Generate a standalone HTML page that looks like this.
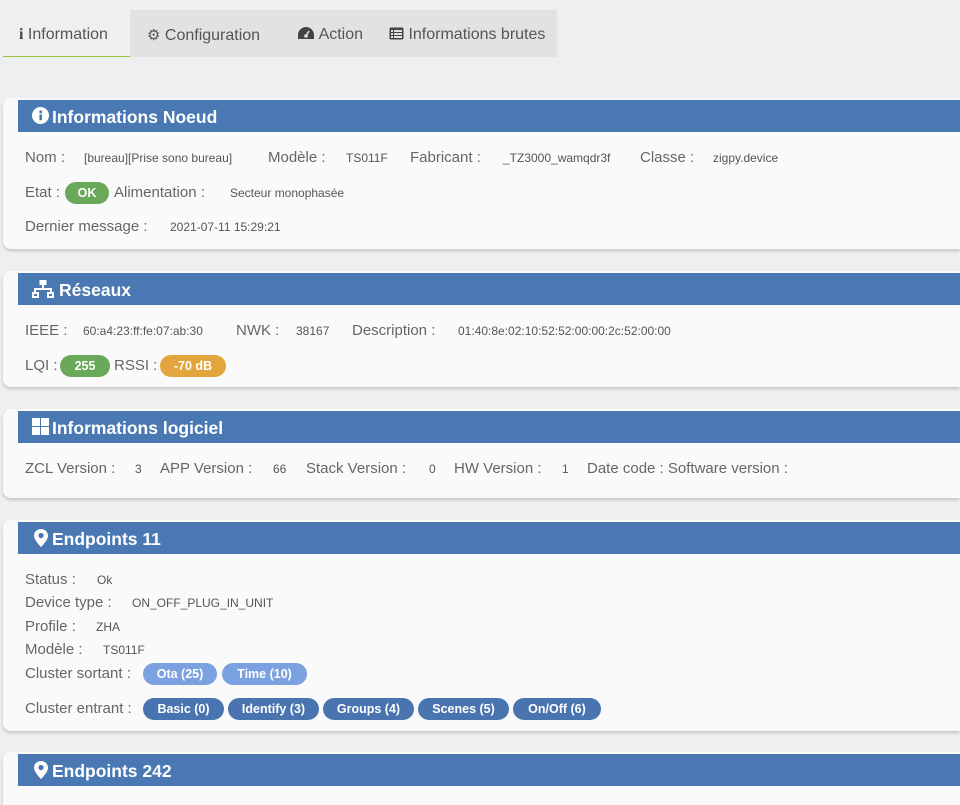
<!DOCTYPE html>
<html style="overflow:hidden;height:805px"><head><meta charset="utf-8"><style>
*{margin:0;padding:0;box-sizing:border-box}
body{width:960px;height:805px;overflow:hidden;background:#eeeff0;font-family:"Liberation Sans",sans-serif;position:relative}
.a{position:absolute;white-space:nowrap}
.tabs{position:absolute;left:130px;top:10px;width:427px;height:47px;background:#e1e2e2}
.tab{position:absolute;top:26px;font-size:16px;color:#555}
.card{position:absolute;left:3px;width:957px;background:#fafafa;border-radius:8px 0 0 8px;box-shadow:0 2px 3px rgba(0,0,0,.18)}
.hd{position:absolute;left:18px;width:942px;height:32px;background:#4a78b3;color:#fff;font-size:17.5px;font-weight:bold;padding:7px 0 0 34px}
.hd svg{position:absolute;left:14px;top:7px}
.l{position:absolute;font-size:15px;color:#666;white-space:nowrap}
.v{position:absolute;font-size:12px;color:#555;white-space:nowrap}
.b{position:absolute;height:22px;border-radius:11px;color:#fff;font-size:12.5px;font-weight:bold;text-align:center;line-height:22px}
.g{background:#6aa85a}.o{background:#e3a53d}.lb{background:#7ba1e0}.db{background:#4a74b0}
</style></head><body>
<div class="a" style="left:3px;top:10px;width:127px;height:47px;border-bottom:1px solid #9ac43a"></div>
<div class="tabs"></div>
<div class="tab" style="left:19px"><b style="font-family:'Liberation Serif';color:#444">i</b> Information</div>
<div class="tab" style="left:147px"><span style="font-size:15px">⚙</span> Configuration</div>
<div class="tab" style="left:297px"><svg width="18" height="14" viewBox="0 0 18 14" style="vertical-align:-1px"><path d="M9 1A8 8 0 0 0 1 9v4h16V9A8 8 0 0 0 9 1z" fill="#444"/><circle cx="9" cy="10" r="1.8" fill="#e1e2e2"/><path d="M9 10L12 5" stroke="#e1e2e2" stroke-width="1.6"/></svg> Action</div>
<div class="tab" style="left:389px"><svg width="15" height="13" viewBox="0 0 15 13" style="vertical-align:-1px"><rect x=".5" y=".5" width="14" height="12" rx="1.5" fill="#444"/><rect x="2" y="3" width="2" height="2" fill="#e1e2e2"/><rect x="5" y="3" width="8" height="2" fill="#e1e2e2"/><rect x="2" y="6" width="2" height="2" fill="#e1e2e2"/><rect x="5" y="6" width="8" height="2" fill="#e1e2e2"/><rect x="2" y="9" width="2" height="2" fill="#e1e2e2"/><rect x="5" y="9" width="8" height="2" fill="#e1e2e2"/></svg> Informations brutes</div>

<div class="card" style="top:98px;height:151px"></div>
<div class="hd" style="top:100px"><svg width="17" height="17" viewBox="0 0 16 16"><circle cx="8" cy="8" r="8" fill="#fff"/><rect x="7" y="7" width="2.4" height="5.5" fill="#4a78b3"/><circle cx="8.2" cy="4.6" r="1.4" fill="#4a78b3"/></svg>Informations Noeud</div>
<div class="l" style="left:25px;top:149px">Nom :</div><div class="v" style="left:84px;top:151px">[bureau][Prise sono bureau]</div>
<div class="l" style="left:268px;top:149px">Modèle :</div><div class="v" style="left:346px;top:151px">TS011F</div>
<div class="l" style="left:410px;top:149px">Fabricant :</div><div class="v" style="left:503px;top:151px">_TZ3000_wamqdr3f</div>
<div class="l" style="left:640px;top:149px">Classe :</div><div class="v" style="left:713px;top:151px">zigpy.device</div>
<div class="l" style="left:25px;top:184px">Etat :</div><div class="b g" style="left:65px;top:182px;width:44px">OK</div>
<div class="l" style="left:114px;top:184px">Alimentation :</div><div class="v" style="left:230px;top:186px">Secteur monophasée</div>
<div class="l" style="left:25px;top:218px">Dernier message :</div><div class="v" style="left:170px;top:220px">2021-07-11 15:29:21</div>

<div class="card" style="top:271px;height:116px"></div>
<div class="hd" style="top:273px"><svg width="22" height="18" viewBox="0 0 22 18"><g fill="#fff"><rect x="7.5" y="0" width="7" height="5"/><rect x="10" y="5" width="2" height="4"/><rect x="2" y="8" width="18" height="2"/><rect x="2" y="8" width="2" height="4"/><rect x="18" y="8" width="2" height="4"/><rect x="0" y="12" width="7" height="6"/><rect x="15" y="12" width="7" height="6"/></g><rect x="2" y="14" width="3" height="2" fill="#4a78b3"/><rect x="17" y="14" width="3" height="2" fill="#4a78b3"/></svg><span style="margin-left:7px">Réseaux</span></div>
<div class="l" style="left:25px;top:322px">IEEE :</div><div class="v" style="left:83px;top:324px">60:a4:23:ff:fe:07:ab:30</div>
<div class="l" style="left:236px;top:322px">NWK :</div><div class="v" style="left:296px;top:324px">38167</div>
<div class="l" style="left:352px;top:322px">Description :</div><div class="v" style="left:458px;top:324px">01:40:8e:02:10:52:52:00:00:2c:52:00:00</div>
<div class="l" style="left:25px;top:357px">LQI :</div><div class="b g" style="left:60px;top:355px;width:50px">255</div>
<div class="l" style="left:114px;top:357px">RSSI :</div><div class="b o" style="left:160px;top:355px;width:66px">-70 dB</div>

<div class="card" style="top:409px;height:89px"></div>
<div class="hd" style="top:411px"><svg width="17" height="17" viewBox="0 0 17 17"><g fill="#fff"><rect x="0" y="0" width="8" height="8"/><rect x="9" y="0" width="8" height="8"/><rect x="0" y="9" width="8" height="8"/><rect x="9" y="9" width="8" height="8"/></g></svg>Informations logiciel</div>
<div class="l" style="left:25px;top:460px">ZCL Version :</div><div class="v" style="left:135px;top:462px">3</div>
<div class="l" style="left:160px;top:460px">APP Version :</div><div class="v" style="left:273px;top:462px">66</div>
<div class="l" style="left:306px;top:460px">Stack Version :</div><div class="v" style="left:429px;top:462px">0</div>
<div class="l" style="left:454px;top:460px">HW Version :</div><div class="v" style="left:562px;top:462px">1</div>
<div class="l" style="left:587px;top:460px">Date code : Software version :</div>

<div class="card" style="top:520px;height:211px"></div>
<div class="hd" style="top:522px"><svg width="14" height="18" viewBox="0 0 14 18" style="left:16px"><path d="M7 0A7 7 0 0 0 0 7c0 4 7 11 7 11s7-7 7-11A7 7 0 0 0 7 0z" fill="#fff"/><circle cx="7" cy="6.5" r="2.6" fill="#4a78b3"/></svg>Endpoints 11</div>
<div class="l" style="left:25px;top:571px">Status :</div><div class="v" style="left:97px;top:573px">Ok</div>
<div class="l" style="left:25px;top:594px">Device type :</div><div class="v" style="left:132px;top:596px">ON_OFF_PLUG_IN_UNIT</div>
<div class="l" style="left:25px;top:618px">Profile :</div><div class="v" style="left:96px;top:620px">ZHA</div>
<div class="l" style="left:25px;top:641px">Modèle :</div><div class="v" style="left:103px;top:643px">TS011F</div>
<div class="l" style="left:25px;top:665px">Cluster sortant :</div>
<div class="b lb" style="left:143px;top:663px;width:74px">Ota (25)</div>
<div class="b lb" style="left:222px;top:663px;width:85px">Time (10)</div>
<div class="l" style="left:25px;top:700px">Cluster entrant :</div>
<div class="b db" style="left:143px;top:698px;width:81px">Basic (0)</div>
<div class="b db" style="left:228px;top:698px;width:91px">Identify (3)</div>
<div class="b db" style="left:323px;top:698px;width:91px">Groups (4)</div>
<div class="b db" style="left:418px;top:698px;width:91px">Scenes (5)</div>
<div class="b db" style="left:513px;top:698px;width:88px">On/Off (6)</div>

<div class="card" style="top:752px;height:53px;border-radius:8px 0 0 0"></div>
<div class="hd" style="top:754px"><svg width="14" height="18" viewBox="0 0 14 18" style="left:16px"><path d="M7 0A7 7 0 0 0 0 7c0 4 7 11 7 11s7-7 7-11A7 7 0 0 0 7 0z" fill="#fff"/><circle cx="7" cy="6.5" r="2.6" fill="#4a78b3"/></svg>Endpoints 242</div>
</body></html>
